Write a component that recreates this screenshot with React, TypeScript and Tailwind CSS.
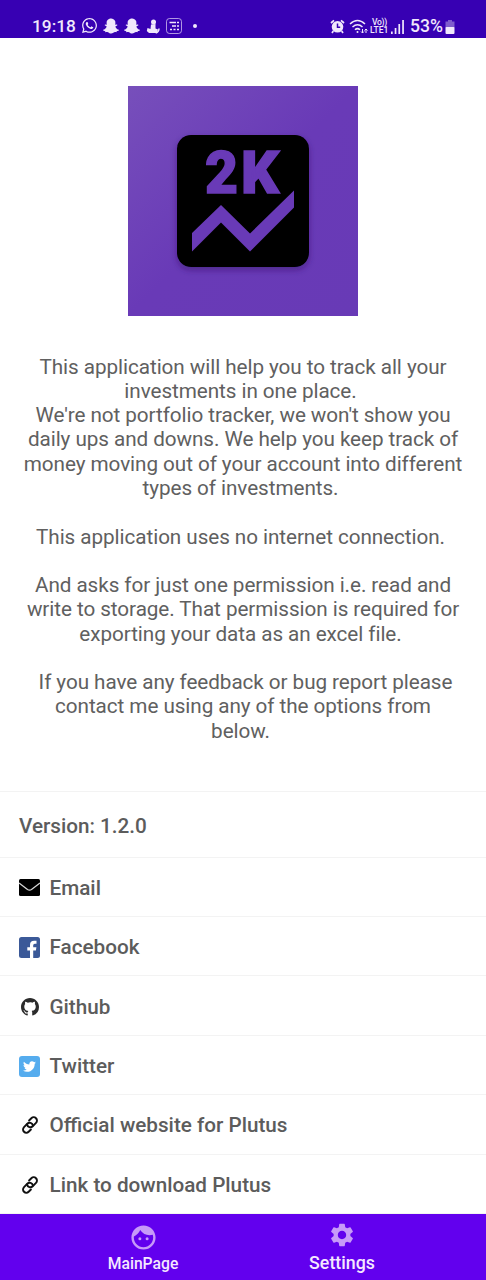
import React from "react";
import { FaTwitter, FaWhatsapp, FaSnapchatGhost } from "react-icons/fa";
import { MdFace, MdSettings } from "react-icons/md";

const ABOUT: { text: string; pad?: string }[] = [
  { text: "This application will help you to track all your" },
  { text: "investments in one place.", pad: "pr-[5px]" },
  { text: "We're not portfolio tracker, we won't show you" },
  { text: "daily ups and downs. We help you keep track of" },
  { text: "money moving out of your account into different" },
  { text: "types of investments.", pad: "pr-[5px]" },
  { text: "" },
  { text: "This application uses no internet connection.", pad: "pr-[5px]" },
  { text: "" },
  { text: "And asks for just one permission i.e. read and" },
  { text: "write to storage. That permission is required for" },
  { text: "exporting your data as an excel file.", pad: "pr-[5px]" },
  { text: "" },
  { text: "If you have any feedback or bug report please", pad: "pl-[5px]" },
  { text: "contact me using any of the options from" },
  { text: "below.", pad: "pr-[5px]" },
];

function StatusBar() {
  return (
    <header className="flex h-[38px] shrink-0 items-end bg-[#3700b3] pr-[31px] pb-[4px] pl-8 text-[#f1e8fc]">
      <span className="w-[49px] text-[17.3px] leading-[16px] font-medium">19:18</span>
      <FaWhatsapp className="h-[17px] w-[17px]" />
      <FaSnapchatGhost className="ml-[5px] h-4 w-4" />
      <FaSnapchatGhost className="ml-[5px] h-4 w-4" />
      <svg className="ml-[6px] h-[15px] w-[14px]" viewBox="0 0 14 15" fill="currentColor">
        <circle cx="7.500" cy="3" r="2.500" />
        <path d="M5 5.500l4.500-.5v4.500l2.500 1-1 3.500H3L.8 12 1.500 9l3 1z" />
        <path d="M13 9.500q0 3.500-3.300 4.500" fill="none" stroke="currentColor" strokeWidth="1.500" />
      </svg>
      <svg className="ml-[6px] h-4 w-4" viewBox="0 0 16 16" fill="none" stroke="currentColor">
        <rect x=".5" y=".5" width="15" height="15" rx="3" opacity=".65" />
        <path d="M3.500 4.500H10M6 8h4" strokeWidth="1.500" />
        <path d="M11 4.500h2M11 8h2M4 11.500h2M7.500 11.500h2M11 11.500h2" strokeWidth="1.700" />
      </svg>
      <span className="mb-[6px] ml-[11px] h-1 w-1 rounded-full bg-[#f1e8fc]" />
      <span className="flex-1" />
      <svg className="h-[15px] w-[15px]" viewBox="0 0 15 15" fill="none" stroke="currentColor">
        <path d="M1 4l3-2.700M14 4l-3-2.700M3.300 12l-1.300 2M11.700 12l1.300 2" strokeWidth="1.700" />
        <circle cx="7.500" cy="7.800" r="5.800" fill="currentColor" stroke="none" />
        <path d="M7.500 4.500v3.700h2.700" stroke="#3700b3" strokeWidth="1.500" />
      </svg>
      <svg className="ml-[4px] h-[15px] w-5" viewBox="0 0 20 15" fill="none" stroke="currentColor" strokeWidth="1.500">
        <path d="M1 5Q8.500-2 16 5M3.500 8Q8.500 3.500 13.500 8M6 10.800Q8.500 8.500 11 10.800" />
        <circle cx="8.500" cy="13" r="1" fill="currentColor" stroke="none" />
        <path d="M13.500 10v4M12 12.500l1.500 1.500 1.500-1.500M17 14v-4M15.500 11.500L17 10l1.500 1.500" strokeWidth="1" />
      </svg>
      <span className="mr-[2px] ml-[1px] flex w-[19px] flex-col text-[8.500px] leading-[8px] font-medium">
        <span className="text-center tracking-[-0.3px]">Vo))</span>
        <span>LTE1</span>
      </span>
      <svg className="h-[14px] w-[13px]" viewBox="0 0 13 14" fill="currentColor">
        <path d="M0 11.500h1.700V14H0zM3.700 8h1.700v6H3.700zM7.400 4h1.700v10H7.400zM11.200 0h1.700v14h-1.700z" />
      </svg>
      <span className="ml-[6px] text-[17.6px] leading-[16px] font-medium">53%</span>
      <svg className="ml-[2px] h-[14px] w-[10px]" viewBox="0 0 10 14">
        <path d="M3 0h4v1.500h2.500V8H.5V1.500H3z" fill="#7f5ccd" />
        <rect x=".5" y="7" width="9" height="7" rx="1" fill="currentColor" />
      </svg>
    </header>
  );
}

function Logo() {
  return (
    <svg className="h-[230px] w-[230px]" viewBox="0 0 230 230">
      <defs>
        <linearGradient id="backdrop" x1="0" y1="0" x2="1" y2="1">
          <stop offset="0" stopColor="#774fbb" />
          <stop offset=".5" stopColor="#693ab7" />
          <stop offset="1" stopColor="#683ab6" />
        </linearGradient>
        <filter id="shadow" x="-20%" y="-20%" width="140%" height="140%">
          <feDropShadow dx="0" dy="3" stdDeviation="3" floodColor="#30105f" floodOpacity=".5" />
        </filter>
      </defs>
      <rect width="230" height="230" fill="url(#backdrop)" />
      <rect x="49" y="49" width="132" height="132" rx="14" fill="#020202" filter="url(#shadow)" />
      <g fill="#693ab7" stroke="#693ab7" strokeWidth="1.500" fontFamily="Roboto, sans-serif" fontWeight="900" fontSize="60">
        <text x="77" y="107.300" textLength="33" lengthAdjust="spacingAndGlyphs">2</text>
        <text x="113" y="107.300" textLength="38" lengthAdjust="spacingAndGlyphs">K</text>
      </g>
      <path d="M64 147l29-28 29 28.500 44-43v17l-44 44-29-29-29 29z" fill="#693ab7" />
    </svg>
  );
}

function MailIcon() {
  return (
    <svg className="h-[17px] w-[21px]" viewBox="0 0 21 17">
      <rect width="21" height="17" rx="1.500" fill="#000" />
      <path d="M0 4l8.500 6.500q2 1.300 4 0L21 4" fill="none" stroke="#d8d8d8" strokeWidth="1.300" />
    </svg>
  );
}

function FacebookIcon() {
  return (
    <svg className="h-[21px] w-[21px]" viewBox="0 0 21 21">
      <rect width="21" height="21" rx="2.500" fill="#3b5998" />
      <path d="M11 21v-7.500H8.300v-3.200H11V8q0-4.200 4.200-4.200h2.300v2.900h-1.700q-1.600 0-1.600 1.600v2h3.200l-.5 3.200h-2.700V21z" fill="#fff" />
    </svg>
  );
}

function GithubIcon() {
  return (
    <svg className="h-[18px] w-[18px]" viewBox="0 0 16 16" fill="#2b2b2b">
      <path d="M8 0C3.580 0 0 3.580 0 8c0 3.540 2.290 6.530 5.470 7.590.4.070.55-.17.55-.38 0-.19-.01-.82-.01-1.490-2.010.37-2.530-.49-2.690-.94-.09-.23-.48-.94-.82-1.130-.28-.15-.68-.52-.01-.53.63-.01 1.080.58 1.230.82.72 1.210 1.870.87 2.330.66.07-.52.28-.87.51-1.070-1.780-.2-3.640-.89-3.640-3.950 0-.87.31-1.590.82-2.150-.08-.2-.36-1.020.08-2.120 0 0 .67-.21 2.200.82A7.600 7.600 0 018 3.860c.68 0 1.360.09 2 .27 1.530-1.040 2.200-.82 2.200-.82.44 1.100.16 1.920.08 2.120.51.56.82 1.270.82 2.150 0 3.070-1.870 3.750-3.650 3.950.29.25.54.73.54 1.480 0 1.070-.01 1.930-.01 2.200 0 .21.150.46.55.38A8.010 8.010 0 0016 8c0-4.420-3.580-8-8-8z" />
    </svg>
  );
}

function ChainIcon() {
  return (
    <svg className="h-[18px] w-[18px]" viewBox="0 0 18 18">
      <g transform="rotate(-45 9 9)" fill="none" stroke="#111" strokeWidth="1.900" strokeLinecap="round">
        <path d="M6.500 12.800H3.300a3.300 3.300 0 010-6.600H8a3.300 3.300 0 012.700 5.200" />
        <path d="M11.500 5.200h3.200a3.300 3.300 0 010 6.600H10a3.300 3.300 0 01-2.700-5.200" />
      </g>
    </svg>
  );
}

function LinkRow({ icon, label }: { icon: React.ReactNode; label: string }) {
  return (
    <li className="flex h-[59.4px] items-center border-b border-[#f3f3f3] pt-[3px] pl-[19px]">
      <span className="mr-[9.5px] flex w-[21px] justify-center pb-[1px]">{icon}</span>
      <span>{label}</span>
    </li>
  );
}

export default function App() {
  return (
    <div className="flex h-[1280px] w-[486px] flex-col bg-white font-['Roboto',sans-serif]">
      <StatusBar />
      <main className="flex flex-1 flex-col">
        <div className="mt-12 flex justify-center">
          <Logo />
        </div>
        <div className="mt-[38.700px] text-center text-[20.7px] leading-[24.27px] tracking-[-0.065px] text-[#606060]">
          {ABOUT.map((line, i) => (
            <p key={i} className={`h-[24.27px] whitespace-nowrap ${line.pad ?? ""}`}>{line.text}</p>
          ))}
        </div>
        <ul className="mt-auto border-t border-[#f3f3f3] text-[20.7px] font-medium text-[#5c5c5c]">
          <li className="flex h-[66px] items-center border-b border-[#f3f3f3] pt-[4px] pl-[19px]">Version: 1.2.0</li>
          <LinkRow icon={<MailIcon />} label="Email" />
          <LinkRow icon={<FacebookIcon />} label="Facebook" />
          <LinkRow icon={<GithubIcon />} label="Github" />
          <LinkRow
            icon={
              <span className="flex h-[21px] w-[21px] items-center justify-center rounded-[3px] bg-[#55acee]">
                <FaTwitter className="h-[13px] w-[13px] text-white" />
              </span>
            }
            label="Twitter"
          />
          <LinkRow icon={<ChainIcon />} label="Official website for Plutus" />
          <LinkRow icon={<ChainIcon />} label="Link to download Plutus" />
        </ul>
      </main>
      <nav className="flex h-[66px] shrink-0 justify-center bg-[#6200ee] pr-[1px] font-medium text-[#f5e8ff]">
        <div className="flex w-[199px] flex-col items-center">
          <MdFace className="mt-[9px] h-[29px] w-[29px] text-[#c79af8]" />
          <span className="mt-[2px] text-[15.700px] leading-5">MainPage</span>
        </div>
        <div className="flex w-[199px] flex-col items-center">
          <MdSettings className="mt-[7px] h-7 w-7 text-[#c79af8]" />
          <span className="mt-[3px] text-[17.800px] leading-[22px]">Settings</span>
        </div>
      </nav>
    </div>
  );
}
